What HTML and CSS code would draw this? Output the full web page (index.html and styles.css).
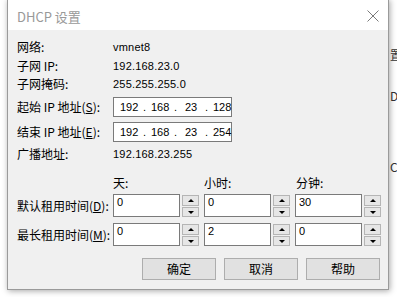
FILE: index.html
```html
<!DOCTYPE html>
<html lang="zh-CN">
<head>
    <meta charset="UTF-8">
    <title>DHCP 设置</title>
    <link rel="stylesheet" href="styles.css">
</head>
<body>
    <div class="backdrop">
        <span class="bg-text t1">置</span>
        <span class="bg-text t2">DC</span>
        <span class="bg-text t3">C</span>
    </div>
    <div class="dialog">
        <header class="titlebar">
            <span class="title">DHCP 设置</span>
            <svg class="close" width="12" height="12" viewBox="0 0 12 12">
                <path d="M0.5 0.5 L11.5 11.5 M11.5 0.5 L0.5 11.5" stroke="#7a7a7a" stroke-width="1"/>
            </svg>
        </header>
        <main class="content">
            <div class="row info first">
                <span class="label">网络:</span>
                <span class="value">vmnet8</span>
            </div>
            <div class="row info">
                <span class="label">子网 IP:</span>
                <span class="value">192.168.23.0</span>
            </div>
            <div class="row info">
                <span class="label">子网掩码:</span>
                <span class="value">255.255.255.0</span>
            </div>
            <div class="row ip-row first-ip">
                <span class="label">起始 IP 地址(<u>S</u>):</span>
                <div class="ip-box">
                    <span>192</span><i>.</i><span>168</span><i>.</i><span>23</span><i>.</i><span>128</span>
                </div>
            </div>
            <div class="row ip-row">
                <span class="label">结束 IP 地址(<u>E</u>):</span>
                <div class="ip-box">
                    <span>192</span><i>.</i><span>168</span><i>.</i><span>23</span><i>.</i><span>254</span>
                </div>
            </div>
            <div class="row info">
                <span class="label">广播地址:</span>
                <span class="value">192.168.23.255</span>
            </div>

            <div class="row heads">
                <span class="label"></span>
                <span class="head">天:</span>
                <span class="head">小时:</span>
                <span class="head">分钟:</span>
            </div>
            <div class="row spin-row">
                <span class="label">默认租用时间(<u>D</u>):</span>
                <div class="spin"><div class="spin-input">0</div><div class="spin-btns"><b class="up"></b><b class="down"></b></div></div>
                <div class="spin"><div class="spin-input">0</div><div class="spin-btns"><b class="up"></b><b class="down"></b></div></div>
                <div class="spin"><div class="spin-input">30</div><div class="spin-btns"><b class="up"></b><b class="down"></b></div></div>
            </div>
            <div class="row spin-row second">
                <span class="label">最长租用时间(<u>M</u>):</span>
                <div class="spin"><div class="spin-input">0</div><div class="spin-btns"><b class="up"></b><b class="down"></b></div></div>
                <div class="spin"><div class="spin-input">2</div><div class="spin-btns"><b class="up"></b><b class="down"></b></div></div>
                <div class="spin"><div class="spin-input">0</div><div class="spin-btns"><b class="up"></b><b class="down"></b></div></div>
            </div>

            <div class="buttons">
                <button>确定</button>
                <button>取消</button>
                <button>帮助</button>
            </div>
        </main>
    </div>
</body>
</html>
```

FILE: styles.css
```css
body {
    margin: 0;
    width: 397px;
    height: 297px;
    overflow: hidden;
    background: #fff;
    position: relative;
    font-family: "Noto Sans CJK SC", "Liberation Sans", sans-serif;
    font-size: 12px;
    color: #000;
}
.backdrop {
    position: absolute;
    left: 0;
    top: 0;
    width: 397px;
    height: 297px;
}
.bg-text {
    position: absolute;
    left: 390px;
    color: #333;
    font-size: 12px;
    line-height: 14px;
}
.t1 { top: 48px; }
.t2 { top: 89px; }
.t3 { top: 160px; }
.dialog {
    position: absolute;
    left: 7px;
    top: -1px;
    width: 380px;
    height: 289px;
    border: 1px solid #9a9a9a;
    background: #f0f0f0;
    box-shadow: 1px 1px 6px rgba(0, 0, 0, 0.35);
    display: flex;
    flex-direction: column;
}
.titlebar {
    height: 30px;
    background: #fff;
    display: flex;
    align-items: center;
    justify-content: space-between;
    padding: 0 9px 0 9px;
    flex-shrink: 0;
}
.title {
    font-family: "Noto Sans CJK SC", sans-serif;
    font-size: 13px;
    color: #999;
    margin-top: 2px;
}
.close {
    margin-right: 0;
    margin-top: 1px;
}
.content {
    padding: 8px 0 0 9px;
}
.row {
    display: flex;
    align-items: center;
}
.label {
    width: 96px;
    flex-shrink: 0;
    line-height: 18px;
    white-space: nowrap;
}
.label u {
    text-decoration: underline;
    text-underline-offset: 1px;
}
.info {
    height: 18.5px;
}
.value {
    font-family: "Liberation Sans", sans-serif;
    font-size: 11px;
    letter-spacing: 0.2px;
}
.ip-row {
    height: 20px;
    margin-bottom: 5px;
}
.first-ip {
    margin-top: 3px;
}
.ip-row + .info {
    margin-top: -2px;
}
.ip-box {
    width: 117px;
    height: 18px;
    border: 1px solid #7a7a7a;
    background: #fff;
    display: flex;
    align-items: center;
    padding-left: 6px;
    box-sizing: content-box;
    font-family: "Liberation Sans", sans-serif;
    font-size: 11px;
    width: 111px;
}
.ip-box span {
    width: 18px;
    text-align: center;
}
.ip-box span:first-child {
    width: 18px;
}
.ip-box i {
    font-style: normal;
    width: 13px;
    text-align: center;
}
.heads {
    height: 18px;
    margin-top: 11px;
}
.head {
    width: 91px;
    flex-shrink: 0;
    line-height: 18px;
}
.head + .head {
    width: 92px;
}
.spin-row {
    height: 23px;
    margin-top: 2px;
}
.spin-row.second {
    margin-top: 6px;
}
.spin {
    display: flex;
    width: 90px;
    margin-right: 1px;
    height: 23px;
}
.spin-input {
    width: 62px;
    height: 21px;
    border: 1px solid #7a7a7a;
    background: #fff;
    font-family: "Liberation Sans", sans-serif;
    font-size: 11px;
    padding-left: 3px;
    line-height: 14px;
}
.spin-btns {
    width: 17px;
    margin-left: 2px;
    display: flex;
    flex-direction: column;
    gap: 1px;
    padding-top: 1px;
}
.spin-btns b {
    height: 9px;
    border: 1px solid #b5b5b5;
    background: #e6e6e6;
    position: relative;
}
.spin-btns b::after {
    content: "";
    position: absolute;
    left: 5px;
    border-left: 3px solid transparent;
    border-right: 3px solid transparent;
}
.spin-btns .up::after {
    top: 3px;
    border-bottom: 3px solid #000;
}
.spin-btns .down::after {
    top: 3px;
    border-top: 3px solid #000;
}
.buttons {
    display: flex;
    justify-content: flex-end;
    gap: 8px;
    margin-top: 12px;
    padding-right: 8px;
}
button {
    width: 74px;
    height: 22px;
    border: 1px solid #adadad;
    background: #e1e1e1;
    font-family: "Noto Sans CJK SC", sans-serif;
    font-size: 12px;
    color: #000;
    padding: 0;
    line-height: 18px;
}
```
